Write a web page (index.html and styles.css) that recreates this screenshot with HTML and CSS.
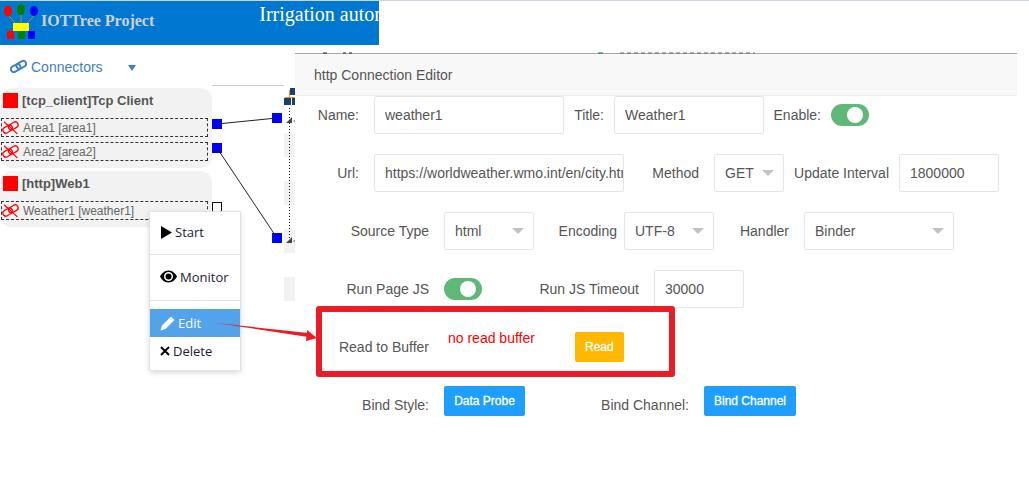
FILE: index.html
```html
<!DOCTYPE html>
<html>
  <head>
    <meta charset="utf-8">
    <meta name="viewport" content="width=device-width, initial-scale=1.0">
    <title>IOTTree Project</title>
    <link rel="stylesheet" href="styles.css">
  </head>
  <body>
    <svg class="defs" width="0" height="0">
      <symbol id="chain" viewBox="0 0 16 16">
        <rect x="0.600" y="6.750" width="9.500" height="5.500" rx="2.750" transform="rotate(-30 5.350 9.500)" fill="none" stroke="currentColor" stroke-width="1.800"/>
        <rect x="5.900" y="3.750" width="9.500" height="5.500" rx="2.750" transform="rotate(-30 10.650 6.500)" fill="none" stroke="currentColor" stroke-width="1.800"/>
      </symbol>
      <symbol id="broken" viewBox="0 0 16 16">
        <rect x="0.600" y="6.750" width="9.500" height="5.500" rx="2.750" transform="rotate(-30 5.350 9.500)" fill="none" stroke="currentColor" stroke-width="1.200"/>
        <rect x="5.900" y="3.750" width="9.500" height="5.500" rx="2.750" transform="rotate(-30 10.650 6.500)" fill="none" stroke="currentColor" stroke-width="1.200"/>
        <path d="M2 2.500 L14.500 14" stroke="currentColor" stroke-width="1.200"/>
      </symbol>
    </svg>

    <header class="top-bar">
      <svg class="logo" width="41" height="45" viewBox="0 0 41 45">
        <path d="M9 16 L15 23 M21 15 L21 23 M34 16 L27 23" stroke="#8a9a3a" stroke-width="1" fill="none"/>
        <ellipse cx="8" cy="11" rx="4" ry="5.500" fill="#f00"/>
        <ellipse cx="21" cy="9.500" rx="4" ry="5.500" fill="#008000"/>
        <ellipse cx="34" cy="11" rx="4" ry="5" fill="#00f"/>
        <rect x="13" y="23" width="16" height="8" fill="#ff0"/>
        <rect x="7" y="31" width="7" height="8" fill="#f00"/>
        <rect x="18" y="31" width="7" height="8" fill="#008000"/>
        <rect x="28" y="31" width="7" height="8" fill="#00f"/>
      </svg>
      <span class="brand">IOTTree Project</span>
      <span class="page-title">Irrigation automation</span>
    </header>

    <aside class="side">
      <div class="toolbar">
        <svg class="tool-link" width="17" height="17"><use href="#chain"/></svg>
        <span class="tool-name">Connectors</span>
        <span class="tool-caret"></span>
      </div>

      <div class="conn-card">
        <div class="conn-head"><span class="conn-state"></span>[tcp_client]Tcp Client</div>
        <div class="conn-item"><svg class="broken" width="17" height="17"><use href="#broken"/></svg>Area1 [area1]</div>
        <div class="conn-item"><svg class="broken" width="17" height="17"><use href="#broken"/></svg>Area2 [area2]</div>
      </div>
      <div class="conn-card">
        <div class="conn-head"><span class="conn-state"></span>[http]Web1</div>
        <div class="conn-item"><svg class="broken" width="17" height="17"><use href="#broken"/></svg>Weather1 [weather1]</div>
      </div>
    </aside>

    <!-- wires and nodes on the canvas -->
    <svg class="canvas" width="295" height="320" viewBox="0 0 295 320">
      <path d="M212 85.500 H284" stroke="#ccc" fill="none"/>
      <g fill="#f2f2f2">
        <rect x="284" y="133" width="11" height="24"/>
        <rect x="284" y="181" width="11" height="24"/>
        <rect x="284" y="229" width="11" height="24"/>
        <rect x="284" y="277" width="11" height="24"/>
      </g>
      <g fill="#00f">
        <rect x="212" y="119" width="10" height="10"/>
        <rect x="212" y="143" width="10" height="10"/>
        <rect x="272" y="113" width="10" height="10"/>
        <rect x="272" y="233" width="10" height="10"/>
      </g>
      <path d="M217 124 L277 118 M217 148 L277 238" stroke="#222" fill="none"/>
      <rect x="212.500" y="202.500" width="9" height="9" fill="#fff" stroke="#111"/>
      <path d="M289.500 108 V238" stroke="#111" stroke-dasharray="1 2" fill="none"/>
      <path d="M292 117 V123 H286 Z M292 237 V243 H286 Z" fill="#444"/>
      <path d="M293.500 121 H295 M293.500 241 H295" stroke="#444" fill="none"/>
      <g>
        <rect x="290" y="88" width="5" height="7" fill="#1c3f6e"/>
        <rect x="284" y="98" width="7" height="7" fill="#1c3f6e"/>
        <rect x="292" y="98" width="3" height="7" fill="#1c3f6e"/>
        <path d="M289.500 90 V97.500 M285 97.500 H295" stroke="#e09a3a" fill="none"/>
      </g>
    </svg>

    <section class="dialog">
      <svg class="dialog-ticks" width="470" height="2" viewBox="0 0 470 2">
        <path d="M28 1 H32 M48 1 H51 M54 1 H57" stroke="#222" fill="none"/>
        <path d="M303 1 H308" stroke="#0a6b5a" fill="none"/>
        <path d="M325 1 H460" stroke="#666" stroke-dasharray="4 3" fill="none"/>
      </svg>
      <div class="dialog-head">http Connection Editor</div>

      <div class="row">
        <label class="lbl w79">Name:</label>
        <input class="txt w190" value="weather1">
        <label class="lbl w50 tight">Title:</label>
        <input class="txt w150" value="Weather1">
        <label class="lbl w67 tight">Enable:</label>
        <span class="switch"><i></i></span>
      </div>

      <div class="row">
        <label class="lbl w79">Url:</label>
        <input class="txt w250" value="https://worldweather.wmo.int/en/city.html?cityId=1">
        <label class="lbl w90">Method</label>
        <div class="select w70">GET</div>
        <label class="lbl w115 tight">Update Interval</label>
        <input class="txt w100" value="1800000">
      </div>

      <div class="row">
        <label class="lbl w149">Source Type</label>
        <div class="select w90">html</div>
        <label class="lbl w90 tighter">Encoding</label>
        <div class="select w90">UTF-8</div>
        <label class="lbl w90">Handler</label>
        <div class="select w150">Binder</div>
      </div>

      <div class="row">
        <label class="lbl w149">Run Page JS</label>
        <span class="switch"><i></i></span>
        <label class="lbl w172">Run JS Timeout</label>
        <input class="txt w90" value="30000">
      </div>

      <div class="row">
        <label class="lbl w149">Read to Buffer</label>
        <span class="no-buffer">no read buffer</span>
        <button class="btn btn-warm">Read</button>
      </div>

      <div class="row row-btns">
        <label class="lbl w149 low">Bind Style:</label>
        <button class="btn btn-blue w81">Data Probe</button>
        <label class="lbl w179 low">Bind Channel:</label>
        <button class="btn btn-blue w92">Bind Channel</button>
      </div>
    </section>

    <ul class="menu">
      <li class="menu-item item-tall">
        <svg class="menu-ico" width="12" height="13" viewBox="0 0 12 13"><path d="M1 0 L12 6.500 L1 13 Z"/></svg>Start
      </li>
      <li class="menu-sep"></li>
      <li class="menu-item item-taller">
        <svg class="menu-ico" width="17" height="13" viewBox="0 0 17 13"><path fill-rule="evenodd" d="M8.500 0.500 C12.500 0.500 15.500 3.500 17 6.500 C15.500 9.500 12.500 12.500 8.500 12.500 C4.500 12.500 1.500 9.500 0 6.500 C1.500 3.500 4.500 0.500 8.500 0.500 Z M8.500 2 A4.500 4.500 0 1 0 8.500 11 A4.500 4.500 0 1 0 8.500 2 Z"/><circle cx="8.500" cy="6.500" r="3"/></svg>Monitor
      </li>
      <li class="menu-sep sep-gap"></li>
      <li class="menu-item item-on">
        <svg class="menu-ico" width="15" height="15" viewBox="0 0 15 15"><path fill="#fff" d="M11 0.500 L14.500 4 L5.500 13 L0.500 14.500 L2 9.500 Z"/></svg>Edit
      </li>
      <li class="menu-item">
        <svg class="menu-ico" width="10" height="10" viewBox="0 0 10 10"><path d="M1 1 L9 9 M9 1 L1 9" stroke="#000" stroke-width="2" fill="none"/></svg>Delete
      </li>
    </ul>

    <!-- red callout drawn over the shot -->
    <div class="callout"></div>
    <svg class="callout-arrow" width="110" height="30" viewBox="0 0 110 30">
      <path d="M6 4 L98 14 L98 18 Z" fill="#ed1c24"/>
      <path d="M107 19 L96 22 L97 11 Z" fill="#ed1c24"/>
    </svg>
  </body>
</html>
```

FILE: styles.css
```css
html, body {
  width: 100%;
  height: 100%;
  margin: 0;
  padding: 0;
  overflow: hidden;
  background: #fff;
  font-family: "Liberation Sans", Arial, sans-serif;
  font-size: 14px;
  color: #555;
}
body {
  border-top: 1px solid #c9d6e2;
  box-sizing: border-box;
}
.defs {
  display: block;
  height: 0;
}

.top-bar {
  display: flex;
  width: 379px;
  height: 44px;
  overflow: hidden;
  background: #0078d2;
  white-space: nowrap;
}
.logo {
  flex: none;
  margin-top: -1px;
}
.brand {
  margin-top: 11px;
  font-family: "Liberation Serif", serif;
  font-weight: bold;
  font-size: 16px;
  color: #d0d0d0;
}
.page-title {
  margin: 2px 0 0 105px;
  font-family: "Liberation Serif", serif;
  font-size: 20px;
  color: #fff;
}

.side {
  width: 212px;
}
.toolbar {
  display: flex;
  align-items: center;
  height: 43px;
  padding: 0 0 0 10px;
  color: #3f7fbd;
}
.tool-link {
  margin-right: 4px;
}
.tool-name {
  font-size: 14px;
}
.tool-caret {
  margin: 2px 0 0 25px;
  border-top: 6px solid #3f7fbd;
  border-left: 4.500px solid transparent;
  border-right: 4.500px solid transparent;
}
.conn-card {
  margin-bottom: 3px;
  padding-bottom: 7px;
  background: #f2f2f2;
  border-radius: 12px;
}
.conn-head {
  display: flex;
  align-items: flex-start;
  box-sizing: border-box;
  height: 30px;
  padding: 5px 0 0 3px;
  line-height: 15px;
  font-weight: bold;
  font-size: 13px;
  color: #555;
}
.conn-state {
  width: 15px;
  height: 15px;
  margin-right: 4px;
  background: #f00;
}
.conn-item {
  display: flex;
  align-items: center;
  box-sizing: border-box;
  width: 207px;
  height: 19px;
  margin: 0 0 5px 1px;
  border: 1px dashed #333;
  font-size: 12px;
  color: #666;
}
.conn-item:last-child {
  margin-bottom: 0;
}
.broken {
  margin-right: 4px;
  color: #f00;
}

.canvas {
  position: absolute;
  left: 0;
  top: 0;
}

.dialog {
  position: absolute;
  left: 295px;
  top: 53px;
  width: 722px;
  background: #fff;
  border-top: 1px solid #a8a8a8;
}
.dialog-ticks {
  position: absolute;
  left: 0;
  top: -2px;
}
.dialog-head {
  height: 41px;
  line-height: 43px;
  padding-left: 19px;
  background: #f8f8f8;
  border-bottom: 1px solid #eee;
  font-size: 14px;
  color: #555;
}
.row {
  display: flex;
  align-items: center;
  height: 38px;
  margin-bottom: 20px;
}
.row-btns {
  height: 30px;
  margin-bottom: 0;
}
.lbl {
  flex: none;
  box-sizing: border-box;
  padding-right: 15px;
  text-align: right;
  white-space: nowrap;
  color: #555;
}
.tight {
  padding-right: 10px;
}
.tighter {
  padding-right: 7px;
}
.low {
  margin-top: 8px;
}
.w50 { width: 50px; }
.w67 { width: 67px; }
.w70 { width: 70px; }
.w79 { width: 79px; }
.w81 { width: 81px; }
.w90 { width: 90px; }
.w92 { width: 92px; }
.w100 { width: 100px; }
.w115 { width: 115px; }
.w149 { width: 149px; }
.w150 { width: 150px; }
.w172 { width: 172px; }
.w179 { width: 179px; }
.w190 { width: 190px; }
.w250 { width: 250px; }

.txt, .select {
  flex: none;
  box-sizing: border-box;
  height: 38px;
  padding: 0 0 0 10px;
  border: 1px solid #e6e6e6;
  border-radius: 2px;
  background: #fff;
  font-family: inherit;
  font-size: 14px;
  color: #555;
  outline: none;
}
.select {
  position: relative;
  line-height: 36px;
}
.select::after {
  content: "";
  position: absolute;
  right: 9px;
  top: 15px;
  border-top: 6px solid #c2c2c2;
  border-left: 6px solid transparent;
  border-right: 6px solid transparent;
}
.switch {
  flex: none;
  display: flex;
  align-items: center;
  justify-content: flex-end;
  box-sizing: border-box;
  width: 38px;
  height: 22px;
  padding-right: 6px;
  border-radius: 11px;
  background: #5fb878;
}
.switch i {
  width: 16px;
  height: 16px;
  border-radius: 50%;
  background: #fff;
}
.no-buffer {
  flex: none;
  box-sizing: border-box;
  width: 131px;
  padding: 0 0 18px 4px;
  color: #f00;
}
.btn {
  flex: none;
  height: 30px;
  padding: 0 10px;
  border: 0;
  border-radius: 2px;
  font-family: inherit;
  font-size: 12px;
  color: #fff;
  -webkit-text-stroke: 0.3px #fff;
}
.btn-warm {
  background: #ffb800;
}
.btn-blue {
  padding: 0;
  background: #1e9fff;
}

.menu {
  position: absolute;
  left: 150px;
  top: 212px;
  box-sizing: border-box;
  width: 90px;
  height: 158px;
  margin: 0;
  padding: 1px 0 0;
  list-style: none;
  background: #fff;
  box-shadow: 0 0 0 1px #e2e2e2, 0 2px 6px rgba(0, 0, 0, 0.2);
  font-family: "Open Sans", sans-serif;
  font-size: 13px;
  color: #1a1a3a;
}
.menu-item {
  display: flex;
  align-items: center;
  height: 28px;
  padding-left: 10px;
}
.item-tall {
  box-sizing: border-box;
  height: 41px;
  padding-bottom: 3px;
}
.item-taller {
  box-sizing: border-box;
  height: 45px;
  padding-bottom: 2px;
}
.item-on {
  background: #52a3ea;
  color: #fff;
}
.menu-sep {
  height: 1px;
  background: #e2e2e2;
}
.sep-gap {
  margin-bottom: 8px;
}
.menu-ico {
  margin-right: 3px;
}

.callout {
  position: absolute;
  left: 316px;
  top: 306px;
  box-sizing: border-box;
  width: 359px;
  height: 71px;
  border: 6px solid #ed1c24;
  border-radius: 3px;
}
.callout-arrow {
  position: absolute;
  left: 210px;
  top: 319px;
}
```
